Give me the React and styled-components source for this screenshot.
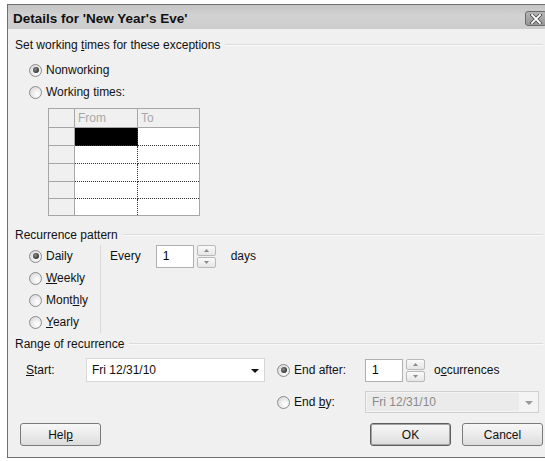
import styled, { createGlobalStyle } from "styled-components";

const GlobalStyle = createGlobalStyle`
  html, body {
    margin: 0;
    padding: 0;
    background: #ffffff;
    overflow: hidden;
  }
  body {
    font-family: "Liberation Sans", Arial, sans-serif;
    font-size: 12px;
    color: #111;
  }
`;

// grid of working times: header row + 5 rows, 3 columns
const ROWS = 5;

export default function App() {
  return (
    <>
      <GlobalStyle />
      <Page>
        <Dialog>
          <TitleBar>
            <Title>Details for 'New Year's Eve'</Title>
            <CloseButton>
              <svg width="12" height="10" viewBox="0 0 12 10">
                <path d="M2 1 L10 9 M10 1 L2 9" stroke="#4a4a4a" strokeWidth="3.4" strokeLinecap="square" />
                <path d="M2 1 L10 9 M10 1 L2 9" stroke="#ffffff" strokeWidth="1.8" strokeLinecap="square" />
              </svg>
            </CloseButton>
          </TitleBar>

          <Body>
            <SectionHeader>
              <span>
                Set working <U>t</U>imes for these exceptions
              </span>
            </SectionHeader>

            <OptionList $top={7}>
              <RadioRow $h={22}>
                <Radio $checked />
                <span>Nonworking</span>
              </RadioRow>
              <RadioRow $h={22}>
                <Radio />
                <span>Working times:</span>
              </RadioRow>
            </OptionList>

            <TimesGrid>
              <Cell $kind="head" />
              <Cell $kind="head">From</Cell>
              <Cell $kind="head" $last>To</Cell>
              {Array.from({ length: ROWS }).map((_, i) => {
                const lastRow = i === ROWS - 1;
                return [
                  <Cell key={`r${i}`} $kind="rowhead" $lastRow={lastRow} />,
                  <Cell key={`f${i}`} $kind={i === 0 ? "selected" : "data"} $lastRow={lastRow} />,
                  <Cell key={`t${i}`} $kind="data" $lastRow={lastRow} $last />,
                ];
              })}
            </TimesGrid>

            <SectionHeader $top={12}>
              <span>Recurrence pattern</span>
            </SectionHeader>

            <PatternBlock>
              <PatternOptions>
                <RadioRow $h={22}>
                  <Radio $checked />
                  <span>Daily</span>
                </RadioRow>
                <RadioRow $h={22}>
                  <Radio />
                  <span>
                    <U>W</U>eekly
                  </span>
                </RadioRow>
                <RadioRow $h={22}>
                  <Radio />
                  <span>
                    Mont<U>h</U>ly
                  </span>
                </RadioRow>
                <RadioRow $h={22}>
                  <Radio />
                  <span>
                    <U>Y</U>early
                  </span>
                </RadioRow>
              </PatternOptions>
              <EveryRow>
                <span>Every</span>
                <NumberBox $ml={15}>1</NumberBox>
                <Spinner />
                <UnitLabel $ml={15}>days</UnitLabel>
              </EveryRow>
            </PatternBlock>

            <SectionHeader $top={4}>
              <span>Range of recurrence</span>
            </SectionHeader>

            <RangeGrid>
              <FieldLabel>
                <U>S</U>tart:
              </FieldLabel>
              <Combo>
                <ComboText>Fri 12/31/10</ComboText>
                <ComboArrow>
                  <svg width="8" height="4" viewBox="0 0 8 4">
                    <path d="M0 0 H8 L4 4 Z" fill="#111" />
                  </svg>
                </ComboArrow>
              </Combo>
              <RadioRow>
                <Radio $checked />
                <span>End after:</span>
              </RadioRow>
              <EndAfterRow>
                <NumberBox>1</NumberBox>
                <Spinner />
                <UnitLabel $ml={9}>
                  o<U>c</U>currences
                </UnitLabel>
              </EndAfterRow>

              <span />
              <span />
              <RadioRow>
                <Radio />
                <span>
                  End <U>b</U>y:
                </span>
              </RadioRow>
              <Combo $disabled>
                <ComboText $disabled>Fri 12/31/10</ComboText>
                <ComboArrow $disabled>
                  <svg width="8" height="4" viewBox="0 0 8 4">
                    <path d="M0 0 H8 L4 4 Z" fill="#9a9a9a" />
                  </svg>
                </ComboArrow>
              </Combo>
            </RangeGrid>

            <ButtonBar>
              <Button>
                Hel<U>p</U>
              </Button>
              <ButtonGroup>
                <Button $default>OK</Button>
                <Button>Cancel</Button>
              </ButtonGroup>
            </ButtonBar>
          </Body>
        </Dialog>
      </Page>
    </>
  );
}

function Spinner() {
  return (
    <SpinBox>
      <SpinButton>
        <svg width="5" height="3" viewBox="0 0 5 3">
          <path d="M0 3 H5 L2.5 0 Z" fill="#8a8a8a" />
        </svg>
      </SpinButton>
      <SpinButton>
        <svg width="5" height="3" viewBox="0 0 5 3">
          <path d="M0 0 H5 L2.5 3 Z" fill="#8a8a8a" />
        </svg>
      </SpinButton>
    </SpinBox>
  );
}

const Page = styled.div`
  padding: 4px 0 0 7px;
`;

const Dialog = styled.div`
  width: 540px;
  box-sizing: border-box;
  border: 1px solid #6f6f6f;
  border-right: none;
  background: #f0f0f0;
`;

const TitleBar = styled.div`
  height: 24px;
  display: flex;
  align-items: center;
  justify-content: space-between;
  padding-left: 5px;
  background: linear-gradient(#c4c4c4, #d2d2d2 45%, #cdcdcd);
`;

const Title = styled.div`
  font-family: "Liberation Sans", Arial, sans-serif;
  font-weight: bold;
  font-size: 13.5px;
  color: #111;
  padding-top: 3px;
`;

const CloseButton = styled.div`
  width: 22px;
  height: 15px;
  margin-top: 3px;
  box-sizing: border-box;
  border: 1px solid #6a6a6a;
  border-radius: 3px;
  background: linear-gradient(#b4b4b4, #969696);
  display: flex;
  align-items: center;
  justify-content: center;
`;

const Body = styled.div`
  padding: 9px 4px 11px 7px;
`;

const U = styled.span`
  text-decoration: underline;
  text-underline-offset: 1px;
`;

const SectionHeader = styled.div`
  display: flex;
  align-items: center;
  gap: 5px;
  height: 14px;
  margin-top: ${(p) => p.$top || 0}px;

  &::after {
    content: "";
    flex: 1;
    height: 1px;
    background: #dcdcdc;
    border-bottom: 1px solid #fafafa;
  }
`;

const OptionList = styled.div`
  margin-top: ${(p) => p.$top || 0}px;
  padding-left: 14px;
`;

const RadioRow = styled.label`
  display: flex;
  align-items: center;
  gap: 4px;
  height: ${(p) => (p.$h ? `${p.$h}px` : "auto")};
  white-space: nowrap;
`;

const Radio = styled.span`
  width: 13px;
  height: 13px;
  flex: none;
  box-sizing: border-box;
  border-radius: 50%;
  border: 1px solid #8c8c8c;
  background: radial-gradient(circle at 65% 65%, #ffffff 0%, #ececec 45%, #cfcfcf 100%);
  display: flex;
  align-items: center;
  justify-content: center;

  &::after {
    content: "";
    display: ${(p) => (p.$checked ? "block" : "none")};
    width: 6px;
    height: 6px;
    border-radius: 50%;
    background: radial-gradient(circle at 40% 40%, #8f8f8f, #2b2b2b 75%);
  }
`;

const TimesGrid = styled.div`
  display: grid;
  grid-template-columns: 26px 63px 61px;
  grid-template-rows: 19px 18px 18px 18px 17px 16px;
  width: max-content;
  margin: 5px 0 0 33px;
  border: 1px solid #a6a6a6;
  background: #ffffff;
`;

const cellBg = {
  head: "#f0f0f0",
  rowhead: "#f0f0f0",
  data: "#ffffff",
  selected: "#000000",
};

const Cell = styled.div`
  box-sizing: border-box;
  background: ${(p) => cellBg[p.$kind]};
  color: #a8a8a8;
  padding-left: 3px;
  line-height: 18px;
  border-right: ${(p) =>
    p.$last
      ? "none"
      : p.$kind === "head" || p.$kind === "rowhead"
      ? "1px solid #a6a6a6"
      : "1px dotted #333"};
  border-bottom: ${(p) =>
    p.$lastRow
      ? "none"
      : p.$kind === "head" || p.$kind === "rowhead"
      ? "1px solid #a6a6a6"
      : "1px dotted #333"};
`;

const PatternBlock = styled.div`
  display: flex;
  margin-top: 3px;
`;

const PatternOptions = styled.div`
  width: 71px;
  padding-left: 14px;
  border-right: 1px solid #dadada;
`;

const EveryRow = styled.div`
  display: flex;
  align-items: center;
  height: 22px;
  padding-left: 9px;
`;

const NumberBox = styled.div`
  width: 38px;
  height: 23px;
  box-sizing: border-box;
  margin-left: ${(p) => p.$ml || 0}px;
  border: 1px solid #b0b0b0;
  background: #ffffff;
  padding-left: 6px;
  display: flex;
  align-items: center;
  color: #000;
`;

const SpinBox = styled.div`
  display: flex;
  flex-direction: column;
  gap: 1px;
  width: 19px;
  height: 23px;
  margin-left: 3px;
`;

const SpinButton = styled.div`
  flex: 1;
  box-sizing: border-box;
  border: 1px solid #b9b9b9;
  border-radius: 2px;
  background: linear-gradient(#fafafa, #e6e6e6);
  display: flex;
  align-items: center;
  justify-content: center;
`;

const UnitLabel = styled.span`
  margin-left: ${(p) => p.$ml || 0}px;
`;

const RangeGrid = styled.div`
  display: grid;
  grid-template-columns: 71px 191px 88px 1fr;
  grid-template-rows: 24px 22px;
  row-gap: 9px;
  align-items: center;
  margin-top: 7px;
`;

const FieldLabel = styled.span`
  padding-left: 11px;
`;

const Combo = styled.div`
  width: ${(p) => (p.$disabled ? "174px" : "179px")};
  height: 100%;
  box-sizing: border-box;
  border: 1px solid ${(p) => (p.$disabled ? "#cfcfcf" : "#d6d6d6")};
  background: ${(p) => (p.$disabled ? "#f4f4f4" : "#ffffff")};
  display: flex;
  align-items: center;
`;

const ComboText = styled.span`
  flex: 1;
  align-self: stretch;
  display: flex;
  align-items: center;
  padding-left: 5px;
  margin: ${(p) => (p.$disabled ? "1px 0 1px 1px" : "0")};
  background: ${(p) => (p.$disabled ? "#ebebeb" : "transparent")};
  color: ${(p) => (p.$disabled ? "#8a8a8a" : "#111")};
`;

const ComboArrow = styled.span`
  width: 19px;
  display: flex;
  justify-content: center;
  padding-top: 2px;
`;

const EndAfterRow = styled.div`
  display: flex;
  align-items: center;
`;

const ButtonBar = styled.div`
  display: flex;
  justify-content: space-between;
  margin-top: 10px;
  padding-left: 5px;
`;

const ButtonGroup = styled.div`
  display: flex;
  gap: 11px;
`;

const Button = styled.button`
  width: 81px;
  height: 23px;
  box-sizing: border-box;
  font-family: "Liberation Sans", Arial, sans-serif;
  font-size: 12px;
  color: #111;
  border: 1px solid ${(p) => (p.$default ? "#5e5e5e" : "#7a7a7a")};
  border-radius: 3px;
  background: linear-gradient(#f7f7f7, #ebebeb 50%, #dcdcdc);
  box-shadow: ${(p) => (p.$default ? "inset 0 0 0 1px #a4a4a4" : "none")};
  padding: 0;
`;
